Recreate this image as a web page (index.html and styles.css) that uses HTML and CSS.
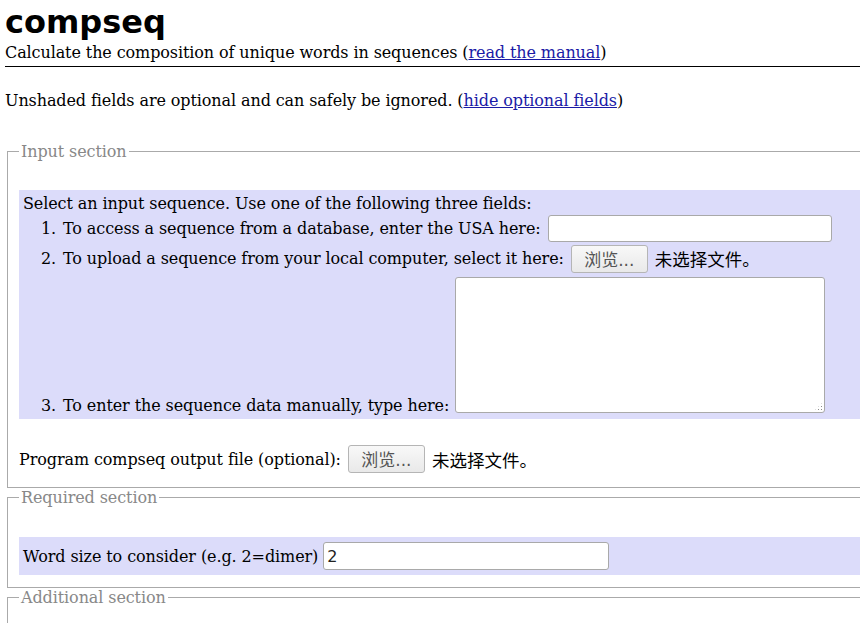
FILE: index.html
```html
<!DOCTYPE html>
<html lang="en">
<head>
<meta charset="utf-8">
<title>compseq</title>
<link rel="stylesheet" href="styles.css">
</head>
<body>
<div class="page">
  <h1 class="title">compseq</h1>
  <div class="subtitle">Calculate the composition of unique words in sequences (<a href="#">read the manual</a>)</div>
  <hr class="rule">
  <p class="note">Unshaded fields are optional and can safely be ignored. (<a href="#">hide optional fields</a>)</p>

  <fieldset class="section section-input">
    <legend>Input section</legend>
    <div class="shaded seq-block">
      <div class="seq-intro">Select an input sequence. Use one of the following three fields:</div>
      <div class="seq-row row-usa">
        <span class="num">1.</span>
        <span class="lbl">To access a sequence from a database, enter the USA here:</span>
        <input class="text usa" type="text">
      </div>
      <div class="seq-row row-upload">
        <span class="num">2.</span>
        <span class="lbl">To upload a sequence from your local computer, select it here:</span>
        <button class="browse" type="button">浏览...</button>
        <span class="nofile" lang="zh-CN">未选择文件。</span>
      </div>
      <div class="seq-row row-text">
        <span class="num">3.</span>
        <span class="lbl">To enter the sequence data manually, type here:</span>
        <span class="ta-wrap"><textarea class="seqdata"></textarea></span>
      </div>
    </div>
    <div class="opt-row">
      <span class="lbl">Program compseq output file (optional):</span>
      <button class="browse" type="button">浏览...</button>
      <span class="nofile" lang="zh-CN">未选择文件。</span>
    </div>
  </fieldset>

  <fieldset class="section section-required">
    <legend>Required section</legend>
    <div class="shaded word-row">
      <span class="lbl">Word size to consider (e.g. 2=dimer)</span>
      <input class="text wordsize" type="text" value="2">
    </div>
  </fieldset>

  <fieldset class="section section-additional">
    <legend>Additional section</legend>
    <div class="spacer"></div>
  </fieldset>
</div>
</body>
</html>
```

FILE: styles.css
```css
html {
  overflow: hidden;
}
body {
  margin: 0;
  font-family: "DejaVu Serif", "Liberation Serif", serif;
  font-size: 16px;
  color: #000;
  background: #fff;
}
.page {
  width: 900px;
  padding-left: 5px;
}
.subtitle,
.note,
.section {
  letter-spacing: -0.1px;
}
a {
  color: #1a1aa6;
  text-decoration: underline;
}
.title {
  font-family: "DejaVu Sans", "Liberation Sans", sans-serif;
  font-weight: bold;
  font-size: 32px;
  line-height: 36px;
  margin: 4px 0 0;
}
.subtitle {
  line-height: 19px;
  margin-top: 3px;
}
.rule {
  border: 0;
  height: 1px;
  background: #000;
  margin: 4px 0 0;
}
.note {
  line-height: 19px;
  margin: 24px 0 0;
}
.section {
  margin: 0 0 0 2px;
  padding: 0 11px;
  border: 1px solid #aaa;
}
.section legend {
  padding: 0 2px;
  color: #888;
  line-height: 19px;
}
.section-input {
  margin-top: 32px;
  padding-top: 29px;
  padding-bottom: 13px;
}
.section-required {
  padding-top: 30px;
  padding-bottom: 12px;
}
.section-additional {
  padding-top: 30px;
}
.shaded {
  background: #dcdcfa;
}
.seq-block {
  padding: 4px 4px 6px;
}
.seq-intro {
  line-height: 19px;
}
.seq-row {
  display: flex;
  align-items: center;
  padding-left: 18px;
  line-height: 19px;
}
.num {
  width: 22px;
  flex: none;
}
.row-usa {
  height: 29px;
  padding-top: 1px;
}
.row-upload {
  height: 31px;
}
.row-text {
  align-items: flex-end;
  margin-top: 3px;
}
.row-text .num,
.row-text .lbl {
  margin-bottom: -2px;
}
.text {
  box-sizing: border-box;
  font-family: "DejaVu Sans", "Liberation Sans", sans-serif;
  font-size: 16px;
  letter-spacing: 0;
  border: 1px solid #a9a9a9;
  border-radius: 3px;
  background: #fff;
  padding: 0 3px;
  margin: 0;
  outline: none;
}
.usa {
  width: 284px;
  height: 27px;
  margin-left: 7px;
}
.wordsize {
  width: 286px;
  height: 28px;
  margin-left: 5px;
  color: #222;
}
.browse {
  box-sizing: border-box;
  width: 77px;
  height: 28px;
  margin: 0 0 0 7px;
  padding: 0 0 1px;
  font-family: "DejaVu Sans", "Noto Sans CJK SC", sans-serif;
  font-size: 17px;
  letter-spacing: 0;
  color: #555;
  background: linear-gradient(#f8f8f8, #e9e9e9);
  border: 1px solid #b5b5b5;
  border-radius: 3px;
}
.nofile {
  font-family: "Noto Sans CJK SC", "Noto Sans", sans-serif;
  font-size: 17.5px;
  letter-spacing: 0;
  margin-left: 7px;
}
.ta-wrap {
  position: relative;
  display: block;
  margin-left: 6px;
  line-height: 0;
}
.ta-wrap::after {
  content: "";
  position: absolute;
  right: 2px;
  bottom: 2px;
  width: 9px;
  height: 9px;
  background: radial-gradient(circle, #8a8a8a 0.7px, transparent 1px) 0 0 / 3px 3px;
  clip-path: polygon(100% 0, 100% 100%, 0 100%);
  pointer-events: none;
}
.seqdata {
  box-sizing: border-box;
  display: block;
  width: 370px;
  height: 136px;
  margin: 0;
  border: 1px solid #a9a9a9;
  border-radius: 3px;
  background: #fff;
  resize: none;
  outline: none;
}
.opt-row {
  display: flex;
  align-items: center;
  height: 30px;
  margin-top: 25px;
}
.word-row {
  display: flex;
  align-items: center;
  height: 38px;
  box-sizing: border-box;
  padding: 0 4px;
}
.spacer {
  height: 40px;
}
```
